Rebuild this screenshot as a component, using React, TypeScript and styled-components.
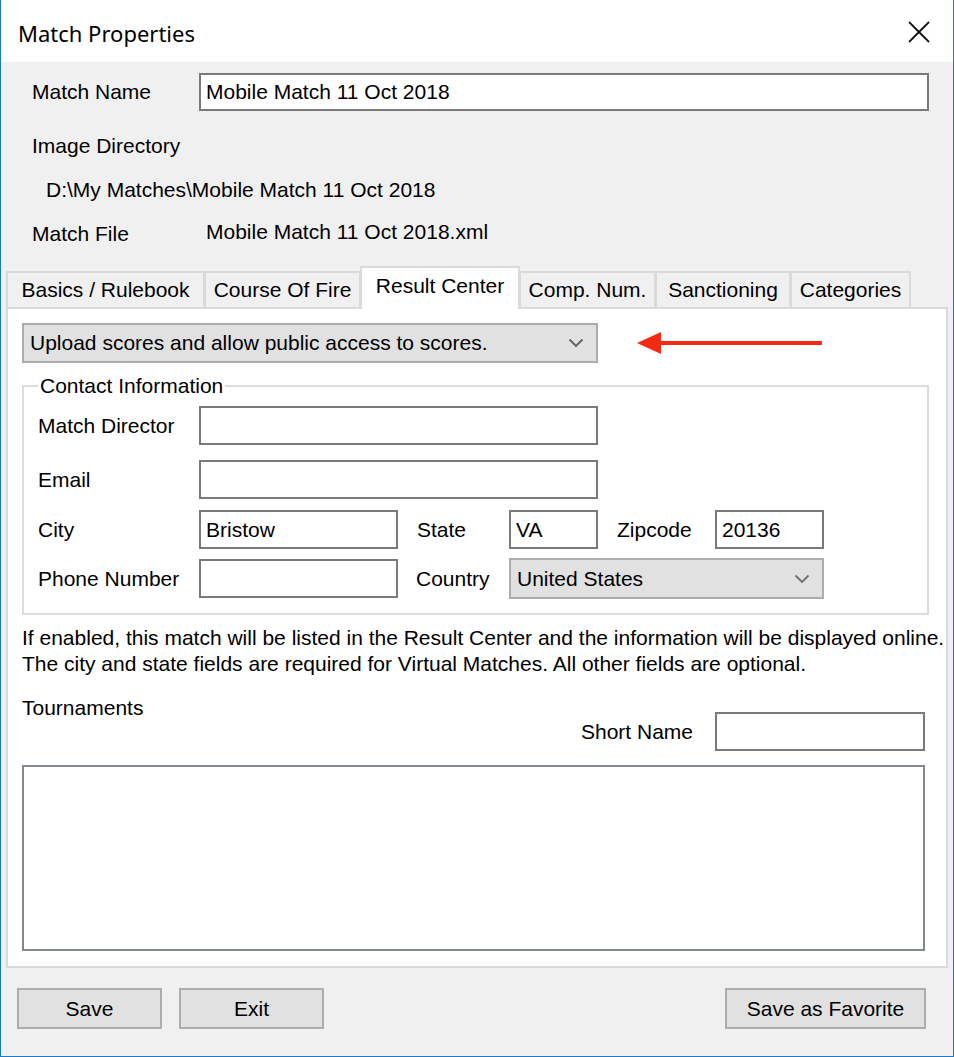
import React from "react";
import styled, { createGlobalStyle } from "styled-components";

const GlobalStyle = createGlobalStyle`
  html, body {
    margin: 0;
    padding: 0;
    background: #ffffff;
  }
  body {
    font-family: "Liberation Sans", Arial, sans-serif;
    font-size: 21px;
    color: #000000;
  }
  * {
    box-sizing: border-box;
  }
`;

const Window = styled.div`
  width: 954px;
  height: 1057px;
  display: flex;
  flex-direction: column;
  border: 1px solid #1a79c9;
  border-top: none;
  background: #f0f0f0;
`;

const TitleBar = styled.div`
  height: 62px;
  flex-shrink: 0;
  display: flex;
  align-items: center;
  justify-content: space-between;
  padding: 0 22px 0 17px;
  background: #ffffff;
`;

const Title = styled.div`
  font-family: "Noto Sans", "Liberation Sans", sans-serif;
  font-size: 22px;
  margin-top: 4px;
`;

const CloseButton = styled.div`
  width: 24px;
  height: 24px;
  display: flex;
  align-items: center;
  justify-content: center;
  margin-top: 2px;
`;

const Body = styled.div`
  flex: 1;
  display: flex;
  flex-direction: column;
`;

const Header = styled.div`
  padding: 11px 0 0 31px;
`;

const HeaderRow = styled.div<{ $top?: number }>`
  display: flex;
  align-items: center;
  margin-top: ${(p) => p.$top ?? 0}px;
  line-height: 24px;
`;

const HeaderLabel = styled.div`
  width: 167px;
  flex-shrink: 0;
`;

const Indented = styled.div`
  padding-left: 14px;
`;

const FileValue = styled.div`
  padding-left: 7px;
  margin-top: -4px;
`;

const TextBox = styled.input<{ $w: number; $h?: number }>`
  width: ${(p) => p.$w}px;
  height: ${(p) => p.$h ?? 39}px;
  border: 2px solid #7a7a7a;
  background: #ffffff;
  padding: 0 5px;
  font-family: "Liberation Sans", Arial, sans-serif;
  font-size: 21px;
  color: #000000;
  outline: none;
  flex-shrink: 0;
`;

const TabStrip = styled.div`
  display: flex;
  align-items: flex-end;
  height: 41px;
  margin-top: 20px;
  padding-left: 5px;
`;

const Tab = styled.div<{ $w: number; $active?: boolean }>`
  width: ${(p) => p.$w}px;
  height: ${(p) => (p.$active ? 43 : 36)}px;
  margin-bottom: ${(p) => (p.$active ? -2 : 0)}px;
  margin-right: -1px;
  position: relative;
  z-index: ${(p) => (p.$active ? 2 : 1)};
  display: flex;
  align-items: center;
  justify-content: center;
  padding-bottom: ${(p) => (p.$active ? 6 : 0)}px;
  border: 2px solid #dadada;
  border-bottom: none;
  background: ${(p) => (p.$active ? "#ffffff" : "#f0f0f0")};
  white-space: nowrap;
`;

const Panel = styled.div`
  margin-left: 5px;
  width: 942px;
  height: 661px;
  border: 2px solid #dadada;
  background: #ffffff;
  padding: 14px 0 0 14px;
`;

const ModeRow = styled.div`
  display: flex;
  align-items: center;
  gap: 39px;
`;

const ComboBox = styled.div<{ $w: number; $h: number }>`
  width: ${(p) => p.$w}px;
  height: ${(p) => p.$h}px;
  flex-shrink: 0;
  display: flex;
  align-items: center;
  justify-content: space-between;
  padding: 0 12px 0 6px;
  background: #e1e1e1;
  border: 2px solid #adadad;
  white-space: nowrap;
`;

const GroupBox = styled.fieldset`
  width: 907px;
  margin: 11px 0 0 0;
  padding: 8px 0 14px 14px;
  border: 2px solid #dcdcdc;
  min-width: 0;
`;

const Legend = styled.legend`
  margin-left: 0;
  padding: 0 2px;
  line-height: 24px;
`;

const FieldRow = styled.div<{ $top?: number }>`
  display: flex;
  align-items: center;
  margin-top: ${(p) => p.$top ?? 0}px;
`;

const FieldLabel = styled.div<{ $w: number; $gap?: number }>`
  width: ${(p) => p.$w}px;
  margin-left: ${(p) => p.$gap ?? 0}px;
  flex-shrink: 0;
  white-space: nowrap;
`;

const Info = styled.div`
  margin-top: 10px;
  line-height: 26px;
  white-space: nowrap;
`;

const TournamentHeader = styled.div`
  display: flex;
  justify-content: space-between;
  width: 903px;
  margin-top: 19px;
`;

const SectionLabel = styled.div`
  line-height: 24px;
`;

const ShortNameRow = styled.div`
  display: flex;
  align-items: center;
  margin-top: 16px;
`;

const ShortNameLabel = styled.div`
  margin-right: 22px;
`;

const ListBox = styled.div`
  width: 903px;
  height: 186px;
  margin-top: 14px;
  border: 2px solid #828790;
  background: #ffffff;
`;

const Footer = styled.div`
  display: flex;
  justify-content: space-between;
  padding: 20px 27px 0 16px;
`;

const ButtonGroup = styled.div`
  display: flex;
  gap: 17px;
`;

const Button = styled.div<{ $w: number }>`
  width: ${(p) => p.$w}px;
  height: 41px;
  display: flex;
  align-items: center;
  justify-content: center;
  background: #e1e1e1;
  border: 2px solid #adadad;
  white-space: nowrap;
`;

const Chevron = ({ color = "#5f5f5f" }: { color?: string }) => (
  <svg width="16" height="10" viewBox="0 0 16 10">
    <polyline points="1.5,1.5 8,8 14.5,1.5" fill="none" stroke={color} strokeWidth="1.8" />
  </svg>
);

const RedArrow = () => (
  <svg width="186" height="26" viewBox="0 0 186 26">
    <line x1="20" y1="13" x2="185" y2="13" stroke="#f52a12" strokeWidth="4" />
    <polygon points="0,13 24,2 24,24" fill="#f52a12" />
  </svg>
);

const tabs = [
  { label: "Basics / Rulebook", w: 199 },
  { label: "Course Of Fire", w: 157 },
  { label: "Result Center", w: 160, active: true },
  { label: "Comp. Num.", w: 137 },
  { label: "Sanctioning", w: 136 },
  { label: "Categories", w: 121 },
];

export default function App() {
  return (
    <>
      <GlobalStyle />
      <Window>
        <TitleBar>
          <Title>Match Properties</Title>
          <CloseButton>
            <svg width="22" height="22" viewBox="0 0 22 22">
              <line x1="1" y1="1" x2="21" y2="21" stroke="#111" strokeWidth="1.8" />
              <line x1="21" y1="1" x2="1" y2="21" stroke="#111" strokeWidth="1.8" />
            </svg>
          </CloseButton>
        </TitleBar>
        <Body>
          <Header>
            <HeaderRow>
              <HeaderLabel>Match Name</HeaderLabel>
              <TextBox $w={730} $h={38} readOnly value="Mobile Match 11 Oct 2018" />
            </HeaderRow>
            <HeaderRow $top={23}>Image Directory</HeaderRow>
            <HeaderRow $top={20}>
              <Indented>D:\My Matches\Mobile Match 11 Oct 2018</Indented>
            </HeaderRow>
            <HeaderRow $top={20}>
              <HeaderLabel>Match File</HeaderLabel>
              <FileValue>Mobile Match 11 Oct 2018.xml</FileValue>
            </HeaderRow>
          </Header>

          <TabStrip>
            {tabs.map((t) => (
              <Tab key={t.label} $w={t.w} $active={t.active}>
                {t.label}
              </Tab>
            ))}
          </TabStrip>

          <Panel>
            <ModeRow>
              <ComboBox $w={576} $h={40}>
                Upload scores and allow public access to scores.
                <Chevron />
              </ComboBox>
              <RedArrow />
            </ModeRow>

            <GroupBox>
              <Legend>Contact Information</Legend>
              <FieldRow>
                <FieldLabel $w={161}>Match Director</FieldLabel>
                <TextBox $w={399} readOnly value="" />
              </FieldRow>
              <FieldRow $top={15}>
                <FieldLabel $w={161}>Email</FieldLabel>
                <TextBox $w={399} readOnly value="" />
              </FieldRow>
              <FieldRow $top={11}>
                <FieldLabel $w={161}>City</FieldLabel>
                <TextBox $w={199} readOnly value="Bristow" />
                <FieldLabel $w={92} $gap={19}>State</FieldLabel>
                <TextBox $w={89} readOnly value="VA" />
                <FieldLabel $w={98} $gap={19}>Zipcode</FieldLabel>
                <TextBox $w={109} readOnly value="20136" />
              </FieldRow>
              <FieldRow $top={9}>
                <FieldLabel $w={161}>Phone Number</FieldLabel>
                <TextBox $w={199} readOnly value="" />
                <FieldLabel $w={93} $gap={18}>Country</FieldLabel>
                <ComboBox $w={315} $h={41}>
                  United States
                  <Chevron color="#707070" />
                </ComboBox>
              </FieldRow>
            </GroupBox>

            <Info>
              If enabled, this match will be listed in the Result Center and the information will be displayed online.
              <br />
              The city and state fields are required for Virtual Matches. All other fields are optional.
            </Info>

            <TournamentHeader>
              <SectionLabel>Tournaments</SectionLabel>
              <ShortNameRow>
                <ShortNameLabel>Short Name</ShortNameLabel>
                <TextBox $w={210} readOnly value="" />
              </ShortNameRow>
            </TournamentHeader>

            <ListBox />
          </Panel>

          <Footer>
            <ButtonGroup>
              <Button $w={145}>Save</Button>
              <Button $w={145}>Exit</Button>
            </ButtonGroup>
            <Button $w={201}>Save as Favorite</Button>
          </Footer>
        </Body>
      </Window>
    </>
  );
}
